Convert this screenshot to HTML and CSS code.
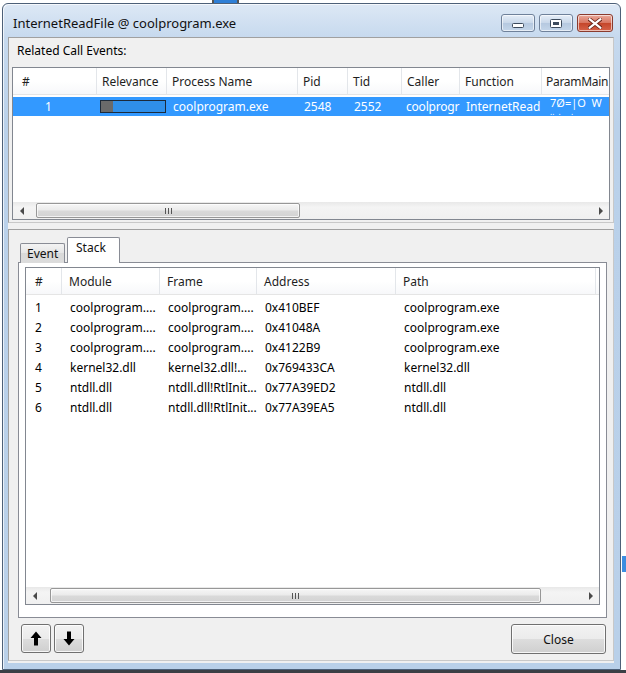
FILE: index.html
```html
<!DOCTYPE html>
<html lang="en">
<head>
    <meta charset="UTF-8">
    <title>InternetReadFile @ coolprogram.exe</title>

    <link rel="stylesheet" href="styles.css">

</head>
<body>
<!-- bits of the desktop behind the window -->
<span class="desk desk_top"></span>
<span class="desk desk_right"></span>
<span class="desk desk_bottom"></span>

<div class="window">
    <div class="titlebar">
        <span class="title">InternetReadFile @ coolprogram.exe</span>
        <div class="caption">
            <div class="cap_btn cap_min">
                <svg width="12" height="6" viewBox="0 0 12 6"><rect x="0.5" y="0.5" width="11" height="4" rx="1" fill="#fff" stroke="#3c4a5c"/></svg>
            </div>
            <div class="cap_btn cap_max">
                <svg width="12" height="9" viewBox="0 0 12 9"><rect x="0.5" y="0.5" width="11" height="8" rx="1" fill="#fff" stroke="#3c4a5c"/><rect x="3" y="3" width="6" height="3" fill="#3c4a5c"/></svg>
            </div>
            <div class="cap_btn cap_close">
                <svg width="14" height="11" viewBox="0 0 14 11"><path d="M1 1 L13 10 M13 1 L1 10" stroke="#6b2418" stroke-width="4" stroke-linecap="round"/><path d="M1.5 1.2 L12.5 9.8 M12.5 1.2 L1.5 9.8" stroke="#fff" stroke-width="2.2" stroke-linecap="round"/></svg>
            </div>
        </div>
    </div>

    <div class="client">
        <div class="panel panel_top">
            <div class="panel_label">Related Call Events:</div>
            <div class="listview">
                <div class="lv_head events_cols">
                    <div class="hcell first">#</div>
                    <div class="hcell">Relevance</div>
                    <div class="hcell">Process Name</div>
                    <div class="hcell">Pid</div>
                    <div class="hcell">Tid</div>
                    <div class="hcell">Caller</div>
                    <div class="hcell">Function</div>
                    <div class="hcell last">ParamMain</div>
                </div>
                <div class="lv_body events_body">
                    <div class="lv_row selected events_cols">
                        <div class="cell num">1</div>
                        <div class="cell"><div class="relevance"><div class="relevance_fill" style="width: 12px"></div></div></div>
                        <div class="cell">coolprogram.exe</div>
                        <div class="cell">2548</div>
                        <div class="cell">2552</div>
                        <div class="cell caller">coolprogr</div>
                        <div class="cell">InternetRead</div>
                        <div class="cell garbled">
                            <span class="garbled_top">7Ø=|O&nbsp; W</span>
                            <span class="garbled_low">.. &nbsp;. &nbsp; &nbsp; .</span>
                        </div>
                    </div>
                </div>
                <div class="hscroll">
                    <div class="sb_arrow"><span class="tri_left"></span></div>
                    <div class="sb_track">
                        <div class="sb_thumb thumb_top"><span class="grip"></span></div>
                    </div>
                    <div class="sb_arrow"><span class="tri_right"></span></div>
                </div>
            </div>
        </div>

        <div class="panel panel_bottom">
            <div class="tabs">
                <div class="tab">Event</div>
                <div class="tab active">Stack</div>
            </div>
            <div class="tab_page">
                <div class="listview stack">
                    <div class="lv_head stack_cols">
                        <div class="hcell first">#</div>
                        <div class="hcell">Module</div>
                        <div class="hcell">Frame</div>
                        <div class="hcell">Address</div>
                        <div class="hcell">Path</div>
                    </div>
                    <div class="lv_body stack_body">
                        <div class="lv_row stack_cols">
                            <div class="cell first">1</div><div class="cell">coolprogram....</div><div class="cell">coolprogram....</div><div class="cell">0x410BEF</div><div class="cell">coolprogram.exe</div>
                        </div>
                        <div class="lv_row stack_cols">
                            <div class="cell first">2</div><div class="cell">coolprogram....</div><div class="cell">coolprogram....</div><div class="cell">0x41048A</div><div class="cell">coolprogram.exe</div>
                        </div>
                        <div class="lv_row stack_cols">
                            <div class="cell first">3</div><div class="cell">coolprogram....</div><div class="cell">coolprogram....</div><div class="cell">0x4122B9</div><div class="cell">coolprogram.exe</div>
                        </div>
                        <div class="lv_row stack_cols">
                            <div class="cell first">4</div><div class="cell">kernel32.dll</div><div class="cell">kernel32.dll!...</div><div class="cell">0x769433CA</div><div class="cell">kernel32.dll</div>
                        </div>
                        <div class="lv_row stack_cols">
                            <div class="cell first">5</div><div class="cell">ntdll.dll</div><div class="cell">ntdll.dll!RtlInit...</div><div class="cell">0x77A39ED2</div><div class="cell">ntdll.dll</div>
                        </div>
                        <div class="lv_row stack_cols">
                            <div class="cell first">6</div><div class="cell">ntdll.dll</div><div class="cell">ntdll.dll!RtlInit...</div><div class="cell">0x77A39EA5</div><div class="cell">ntdll.dll</div>
                        </div>
                    </div>
                    <div class="hscroll">
                        <div class="sb_arrow"><span class="tri_left"></span></div>
                        <div class="sb_track">
                            <div class="sb_thumb thumb_stack"><span class="grip"></span></div>
                        </div>
                        <div class="sb_arrow"><span class="tri_right"></span></div>
                    </div>
                </div>
            </div>
            <div class="footer">
                <div class="btn btn_arrow">
                    <svg width="12" height="15" viewBox="0 0 12 15"><path d="M6 0.5 L11.5 7 H8 V14.5 H4 V7 H0.5 Z" fill="#000"/></svg>
                </div>
                <div class="btn btn_arrow">
                    <svg width="12" height="15" viewBox="0 0 12 15"><path d="M6 14.5 L11.5 8 H8 V0.5 H4 V8 H0.5 Z" fill="#000"/></svg>
                </div>
                <div class="btn btn_close">Close</div>
            </div>
        </div>
    </div>
</div>
</body>
</html>
```

FILE: styles.css
```css
* {
    box-sizing: border-box;
}

body {
    margin: 0;
    width: 626px;
    height: 673px;
    overflow: hidden;
    position: relative;
    background-color: #fff;

    font-family: "Noto Sans", "Open Sans", sans-serif;
    font-size: 12px;
    color: #000;
}

/* desktop behind */
.desk {
    position: absolute;
    display: block;
}

.desk_top {
    left: 212px;
    top: 0;
    width: 27px;
    height: 3px;
    background-color: #2f7fd6;
    border-left: 2px solid #555;
    border-right: 2px solid #555;
}

.desk_right {
    left: 622px;
    top: 556px;
    width: 4px;
    height: 16px;
    background-color: #3c8de0;
}

.desk_bottom {
    left: 0;
    top: 670px;
    width: 626px;
    height: 3px;
    background-color: #3b3f45;
}

/* window frame */
.window {
    margin: 3px 0 0 2px;
    width: 619px;
    height: 667px;
    border: 1px solid #4d6078;
    border-radius: 6px 6px 0 0;
    background: linear-gradient(#dde8f5, #c6d9ee 34px, #bad1ea 120px, #b9d0e9);
    box-shadow: inset 1px 1px 0 rgba(255, 255, 255, 0.7);
    padding: 0 6px 6px 5px;

    display: flex;
    flex-direction: column;
}

.titlebar {
    height: 33px;
    display: flex;
    justify-content: space-between;
}

.title {
    margin: 10px 0 0 5px;
    font-size: 13px;
    color: #111;
}

.caption {
    display: flex;
    gap: 4px;
    margin: 10px 1px 0 0;
}

.cap_btn {
    width: 34px;
    height: 18px;
    border: 1px solid #6f819a;
    border-radius: 3px;
    background: linear-gradient(#e6eef8, #c8d7e9 50%, #b5c8df 50%, #c4d6ea);
    box-shadow: inset 0 0 0 1px rgba(255, 255, 255, 0.6);

    display: flex;
    align-items: center;
    justify-content: center;
}

.cap_min svg {
    margin-top: 5px;
}

.cap_close {
    width: 36px;
    border-color: #8a3b2e;
    background: linear-gradient(#eaa99b, #d8745f 50%, #c44529 50%, #d6634a);
}

.client {
    flex: 1;
    background-color: #f0f0f0;
    padding-bottom: 2px;

    display: flex;
    flex-direction: column;
    gap: 6px;
}

/* sunken panels */
.panel {
    border: 1px solid #a0a0a0;
    border-right-color: #c8c8c8;
    border-bottom-color: #c8c8c8;
}

.panel_top {
    height: 186px;
    padding: 4px 3px 2px 3px;

    display: flex;
    flex-direction: column;
}

.panel_label {
    height: 25px;
    padding-left: 5px;
    line-height: 17px;
}

.panel_bottom {
    flex: 1;
    padding: 8px 6px 6px 9px;

    display: flex;
    flex-direction: column;
}

/* list views */
.listview {
    flex: 1;
    background-color: #fff;
    border: 1px solid #828790;
    overflow: hidden;

    display: flex;
    flex-direction: column;
}

.lv_head {
    height: 27px;
    background: linear-gradient(#fff 50%, #f7f8fa);
    border-bottom: 1px solid #e5e5e5;
}

.events_cols {
    display: grid;
    grid-template-columns: 84px 70px 131px 50px 54px 58px 82px 90px;
}

.stack_cols {
    display: grid;
    grid-template-columns: 36px 98px 97px 139px 200px;
}

.hcell {
    border-right: 1px solid #e3e6ea;
    padding-left: 5px;
    line-height: 27px;
    white-space: nowrap;
    overflow: hidden;
    color: #1e1e1e;
}

.hcell.last {
    padding-left: 4px;
    letter-spacing: -0.3px;
}

.stack .hcell {
    padding-left: 7px;
    line-height: 28px;
}

.hcell.first {
    padding-left: 9px;
}

.lv_body {
    flex: 1;
}

.events_body {
    padding-top: 2px;
}

.stack_body {
    padding-top: 3px;
}

.lv_row {
    height: 20px;
}

.cell {
    padding-left: 6px;
    line-height: 20px;
    white-space: nowrap;
    overflow: hidden;
}

.cell.caller {
    padding-left: 4px;
    letter-spacing: -0.2px;
}

.stack .cell {
    padding-left: 8px;
}

.stack .cell.first {
    padding-left: 9px;
}

.selected {
    height: 19px;
    background-color: #3399ff;
    color: #fff;
}

.selected .cell {
    line-height: 19px;
}

.cell.num {
    padding-left: 32px;
}

.relevance {
    width: 66px;
    height: 13px;
    margin: 3px 0 0 -3px;
    border: 1px solid #1c2a3a;
    background-color: #2f8fe9;
}

.relevance_fill {
    height: 100%;
    background-color: #6a6a6a;
}

.garbled {
    padding-left: 8px;
    display: flex;
    flex-direction: column;
}

.garbled_top {
    font-size: 11px;
    line-height: 11px;
}

.garbled_low {
    font-size: 8px;
    line-height: 7px;
}

/* scroll bars */
.hscroll {
    height: 17px;
    background: linear-gradient(#e8e8e8, #f4f4f4 30%, #f0f0f0);
    display: flex;
}

.sb_arrow {
    width: 17px;
    display: flex;
    align-items: center;
    justify-content: center;
}

.tri_left {
    border-top: 4px solid transparent;
    border-bottom: 4px solid transparent;
    border-right: 4px solid #4a4a4a;
}

.tri_right {
    border-top: 4px solid transparent;
    border-bottom: 4px solid transparent;
    border-left: 4px solid #4a4a4a;
}

.sb_track {
    flex: 1;
    padding: 1px 0;
}

.sb_thumb {
    height: 15px;
    border: 1px solid #979797;
    border-radius: 2px;
    background: linear-gradient(#f6f6f6, #ebebeb 45%, #d9d9d9 55%, #d3d3d3);
    box-shadow: inset 0 0 0 1px rgba(255, 255, 255, 0.7);

    display: flex;
    align-items: center;
    justify-content: center;
}

.thumb_top {
    width: 264px;
    margin-left: 6px;
}

.thumb_stack {
    width: 491px;
    margin-left: 7px;
}

.grip {
    width: 7px;
    height: 6px;
    background: repeating-linear-gradient(90deg, #555 0 1px, transparent 1px 3px);
}

/* tabs */
.tabs {
    height: 25px;
    padding-left: 2px;
    display: flex;
    align-items: flex-end;
    position: relative;
    z-index: 1;
}

.tab {
    width: 45px;
    height: 20px;
    padding-left: 6px;
    line-height: 19px;
    border: 1px solid #898c95;
    border-bottom: none;
    border-radius: 2px 2px 0 0;
    background: linear-gradient(#f3f3f3, #e5e5e5 50%, #d9d9d9 50%, #dcdcdc);
    color: #111;
}

.tab.active {
    width: 53px;
    height: 26px;
    margin-left: 2px;
    padding-left: 8px;
    line-height: 20px;
    background: #fff;
}

.tab_page {
    flex: 1;
    margin-top: -1px;
    background-color: #fff;
    border: 1px solid #898c95;
    padding: 4px 6px 12px 6px;

    display: flex;
    flex-direction: column;
}

/* buttons */
.footer {
    height: 30px;
    margin-top: 6px;
    padding: 0 1px 0 3px;

    display: flex;
    gap: 3px;
}

.btn {
    border: 1px solid #707070;
    border-radius: 3px;
    background: linear-gradient(#f2f2f2, #ebebeb 50%, #dddddd 50%, #cfcfcf);
    box-shadow: inset 0 0 0 1px rgba(255, 255, 255, 0.8);

    display: flex;
    align-items: center;
    justify-content: center;
}

.btn_arrow {
    width: 30px;
    height: 29px;
}

.btn_close {
    width: 95px;
    height: 30px;
    margin-left: auto;
    color: #111;
}
```
